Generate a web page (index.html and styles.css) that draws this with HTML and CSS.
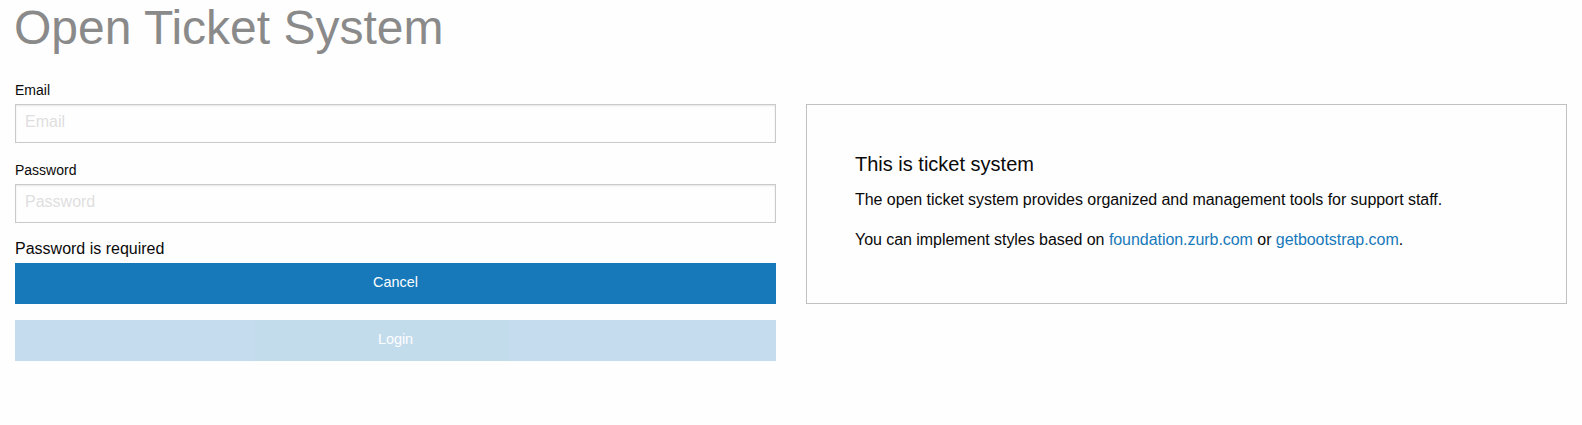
FILE: index.html
```html
<!DOCTYPE html>
<html lang="en">
<head>
<meta charset="utf-8">
<title>Open Ticket System</title>
<link rel="stylesheet" href="styles.css">
</head>
<body>
<h1 class="title">Open Ticket System</h1>
<div class="grid">
  <div class="cell">
    <form class="login-form">
      <label class="field">
        <span class="field-label">Email</span>
        <input class="input" type="email" placeholder="Email">
      </label>
      <label class="field">
        <span class="field-label">Password</span>
        <input class="input" type="password" placeholder="Password">
      </label>
      <div class="error">Password is required</div>
      <button type="button" class="button">Cancel</button>
      <button type="submit" class="button is-disabled" disabled>Login</button>
    </form>
  </div>
  <div class="cell cell-info">
    <div class="callout">
      <h5 class="callout-title">This is ticket system</h5>
      <p class="callout-text">The open ticket system provides organized and management tools for support staff.</p>
      <p class="callout-text">You can implement styles based on <a class="link" href="#">foundation.zurb.com</a> or <a class="link" href="#">getbootstrap.com</a>.</p>
    </div>
  </div>
</div>
</body>
</html>
```

FILE: styles.css
```css
html, body {
  margin: 0;
  padding: 0;
}

body {
  background: #fefefe;
  color: #0a0a0a;
  font-family: "Liberation Sans", Arial, Helvetica, sans-serif;
  font-size: 16px;
  line-height: 1.5;
}

.title {
  margin: 0 0 24px;
  padding: 0 14px;
  font-size: 48px;
  font-weight: 400;
  line-height: 55px;
  color: #8a8a8a;
}

.grid {
  display: grid;
  grid-template-columns: 1fr 1fr;
}

.cell {
  padding: 0 15px;
  min-width: 0;
}

.cell-info {
  padding-top: 25px;
}

.login-form {
  margin: 0;
}

.field {
  display: block;
}

.field-label {
  display: block;
  font-size: 14px;
  line-height: 20px;
  padding-top: 1px;
  margin-bottom: 4px;
  color: #0a0a0a;
}

.input {
  display: block;
  box-sizing: border-box;
  width: 100%;
  height: 39px;
  margin: 0 0 16px;
  padding: 0 9px 4px;
  border: 1px solid #cacaca;
  border-radius: 0;
  background: #fefefe;
  box-shadow: inset 0 1px 2px rgba(10, 10, 10, 0.1);
  font-family: inherit;
  font-size: 16px;
  color: #0a0a0a;
  outline: none;
}

.input::placeholder {
  color: #dedede;
}

.error {
  font-size: 16px;
  line-height: 18px;
  padding-top: 1px;
  margin-bottom: 5px;
}

.button {
  display: block;
  width: 100%;
  margin: 0 0 16px;
  padding: 12px 0 14px;
  border: 0;
  border-radius: 0;
  background: #1779ba;
  color: #fefefe;
  font-family: inherit;
  font-size: 14.4px;
  line-height: 15px;
  text-align: center;
  cursor: pointer;
}

.button.is-disabled {
  opacity: 0.25;
  cursor: not-allowed;
}

.callout {
  box-sizing: border-box;
  padding: 45px 48px 51px;
  border: 1px solid rgba(10, 10, 10, 0.25);
  background: #fefefe;
}

.callout-title {
  margin: 0 0 10px;
  font-size: 20px;
  font-weight: 400;
  line-height: 28px;
}

.callout-text {
  margin: 0 0 16px;
  font-size: 16px;
  line-height: 24px;
  letter-spacing: -0.05px;
}

.callout-text:last-child {
  margin-bottom: 0;
}

.link {
  color: #1779ba;
  text-decoration: none;
}
```
